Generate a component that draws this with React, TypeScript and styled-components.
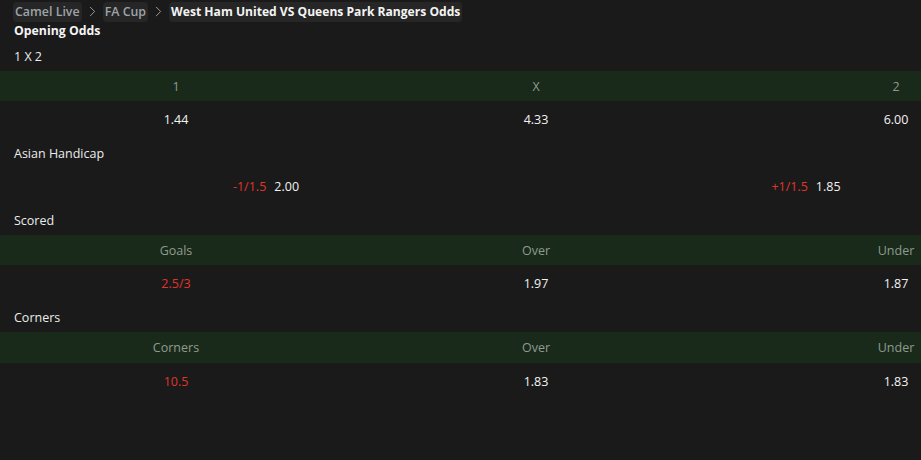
import React from 'react';
import styled, { createGlobalStyle } from 'styled-components';
import { ChevronRight } from 'lucide-react';

const GlobalStyle = createGlobalStyle`
    body {
        margin: 0;
        background-color: #1a1a1a;
        font-family: "Open Sans", "Noto Sans", sans-serif;
        overflow: hidden;
    }
`;

const crumbs = ['Camel Live', 'FA Cup'];

export default function App() {
    return (<>
        <GlobalStyle />
        <Page>
            <Breadcrumb>
                {crumbs.map((c) => (
                    <React.Fragment key={c}>
                        <Crumb>{c}</Crumb>
                        <Chevron><ChevronRight size={17} strokeWidth={1.4} /></Chevron>
                    </React.Fragment>
                ))}
                <Crumb $current>West Ham United VS Queens Park Rangers Odds</Crumb>
            </Breadcrumb>
            <Heading>Opening Odds</Heading>

            <SectionTitle>1 X 2</SectionTitle>
            <Table $cols={3}>
                <HeadCell>1</HeadCell>
                <HeadCell>X</HeadCell>
                <HeadCell>2</HeadCell>
                <ValueCell>1.44</ValueCell>
                <ValueCell>4.33</ValueCell>
                <ValueCell>6.00</ValueCell>
            </Table>

            <SectionTitle>Asian Handicap</SectionTitle>
            <Table $cols={2}>
                <ValueCell><Red>-1/1.5</Red><span>2.00</span></ValueCell>
                <ValueCell><Red>+1/1.5</Red><span>1.85</span></ValueCell>
            </Table>

            <SectionTitle>Scored</SectionTitle>
            <Table $cols={3}>
                <HeadCell>Goals</HeadCell>
                <HeadCell>Over</HeadCell>
                <HeadCell>Under</HeadCell>
                <ValueCell><Red>2.5/3</Red></ValueCell>
                <ValueCell>1.97</ValueCell>
                <ValueCell>1.87</ValueCell>
            </Table>

            <SectionTitle>Corners</SectionTitle>
            <Table $cols={3}>
                <HeadCell $tall>Corners</HeadCell>
                <HeadCell $tall>Over</HeadCell>
                <HeadCell $tall>Under</HeadCell>
                <ValueCell><Red>10.5</Red></ValueCell>
                <ValueCell>1.83</ValueCell>
                <ValueCell>1.83</ValueCell>
            </Table>
        </Page>
    </>);
}

const Page = styled.div`
    width: 921px;
    overflow: hidden;
    color: #ececec;
    font-size: 12.5px;
`;

const Breadcrumb = styled.div`
    display: flex;
    align-items: center;
    padding: 1px 0 0 13px;
    height: 21px;
`;

const Crumb = styled.span<{ $current?: boolean }>`
    height: 20px;
    line-height: 19px;
    padding: 0 2px;
    border-radius: 4px;
    background-color: #262626;
    font-size: ${p => p.$current ? 12.1 : 12.4}px;
    font-weight: ${p => p.$current ? 700 : 600};
    color: ${p => p.$current ? '#f4f4f4' : '#9ea3a8'};
    white-space: nowrap;
`;

const Chevron = styled.span`
    display: flex;
    align-items: center;
    margin: 0 2px;
    color: #9a9a9a;
`;

const Heading = styled.div`
    padding-left: 14px;
    font-size: 12.3px;
    font-weight: 700;
    line-height: 17px;
    color: #f4f4f4;
`;

const SectionTitle = styled.div`
    display: flex;
    align-items: center;
    box-sizing: border-box;
    padding: 3px 0 0 14px;
    height: 32px;
    color: #ececec;
`;

const Table = styled.div<{ $cols: number }>`
    display: grid;
    grid-template-columns: repeat(${p => p.$cols}, 1fr);
    width: 1080px;
    margin-left: -4px;
`;

const HeadCell = styled.div<{ $tall?: boolean }>`
    height: ${p => p.$tall ? 31 : 30}px;
    display: flex;
    align-items: center;
    justify-content: center;
    background-color: #1a2a1a;
    color: #8e9a90;
`;

const ValueCell = styled.div`
    height: 35px;
    display: flex;
    align-items: center;
    justify-content: center;
    box-sizing: border-box;
    padding-top: 2px;
    gap: 8px;
    color: #f2f2f2;
`;

const Red = styled.span`
    color: #e0342c;
`;
